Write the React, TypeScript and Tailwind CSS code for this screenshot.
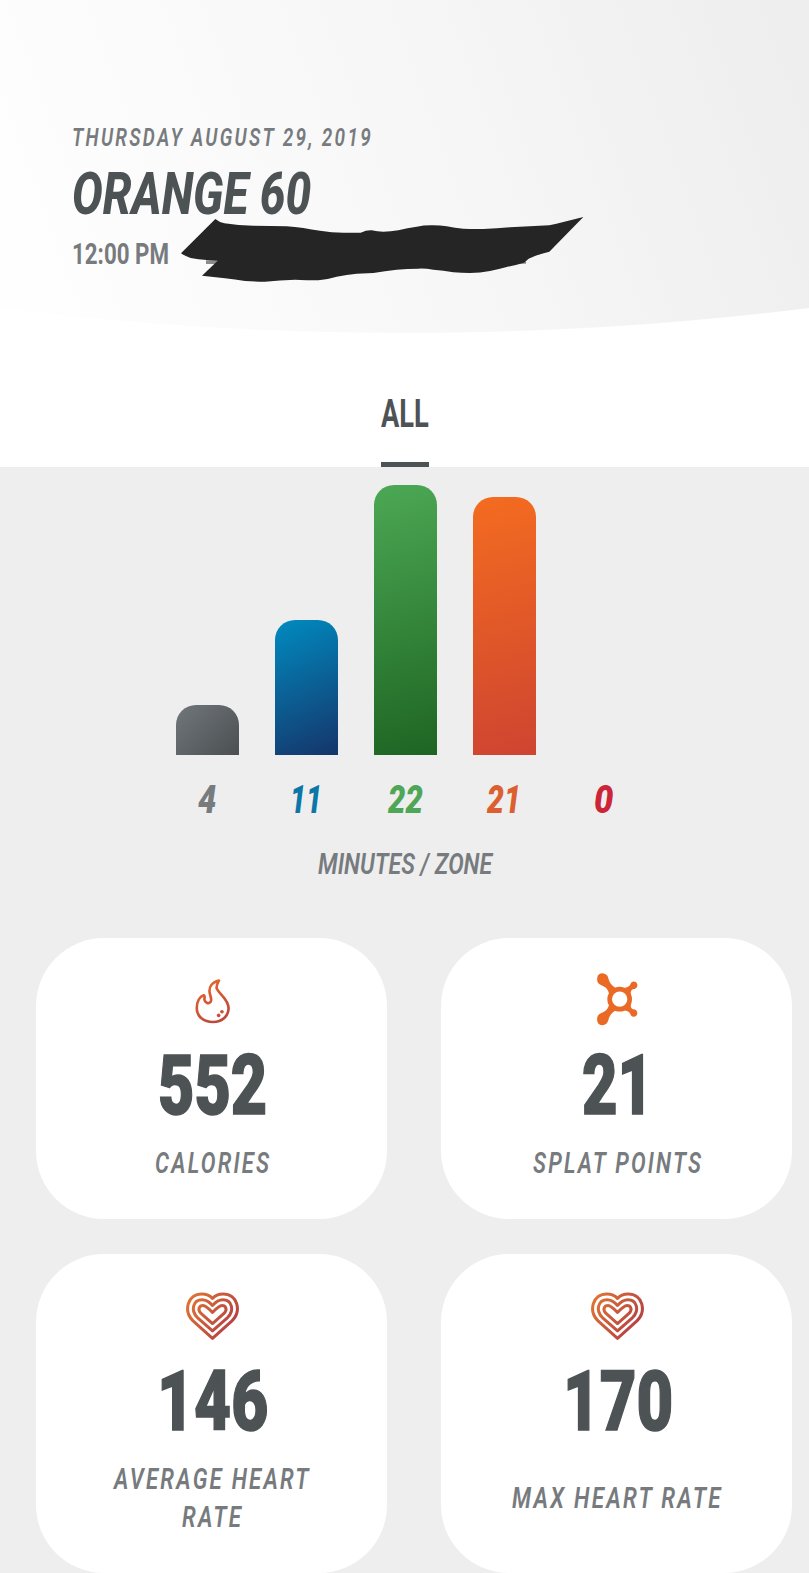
import { useLayoutEffect, useRef, useState } from "react";
import type { ReactNode } from "react";

type FitTextProps = {
  width: number;
  className?: string;
  children: ReactNode;
};

// Condenses a single line of text to the given width
function FitText({ width, className = "", children }: FitTextProps) {
  const ref = useRef<HTMLSpanElement>(null);
  const [scale, setScale] = useState(1);

  useLayoutEffect(() => {
    if (ref.current) setScale(width / ref.current.offsetWidth);
  }, [width]);

  return (
    <span className={`block ${className}`} style={{ width }}>
      <span
        ref={ref}
        className="inline-block origin-left whitespace-nowrap align-top"
        style={{ transform: `scaleX(${scale})` }}
      >
        {children}
      </span>
    </span>
  );
}

function FlameIcon() {
  return (
    <svg viewBox="0 0 120 145" className="h-12 w-10" fill="none">
      <defs>
        <linearGradient id="flame" x1="0" y1="0" x2="0.4" y2="1">
          <stop offset="0" stopColor="#ea6a2a" />
          <stop offset="1" stopColor="#bf4a3c" />
        </linearGradient>
      </defs>
      <path
        d="M78 11C56 16 47 31 50 48C53 62 58 70 52 76C46 82 35 77 34 68C34 62 37 58 32 55C20 59 11 74 11 94C11 120 32 136 60 136C88 136 107 118 107 94C107 66 78 52 71 34C70 24 74 18 78 11Z"
        stroke="url(#flame)"
        strokeWidth="8"
        strokeLinejoin="round"
      />
      <circle cx="87" cy="105" r="5.5" fill="#c9503a" />
      <circle cx="77" cy="116" r="5.5" fill="#c9503a" />
    </svg>
  );
}

function SplatIcon() {
  return (
    <svg viewBox="45 20 135 170" className="-mt-1 h-[57px] w-[45px]" fill="#ea6a25">
      <circle cx="119" cy="104" r="30" fill="none" stroke="#ea6a25" strokeWidth="14" />
      <path d="M52 38C54 24 74 22 82 34C88 43 84 56 106 70L88 90C82 66 70 66 60 60C52 55 50 47 52 38Z" />
      <path d="M52 170C54 184 74 186 82 174C88 165 84 152 106 138L88 118C82 142 70 142 60 148C52 153 50 161 52 170Z" />
      <path d="M134 70C148 68 150 62 152 57C156 48 170 49 172 60C173 70 166 74 159 74C153 76 152 80 152 90Z" />
      <path d="M134 138C148 140 150 146 152 151C156 160 170 159 172 148C173 138 166 134 159 134C153 132 152 128 152 118Z" />
    </svg>
  );
}

function HeartIcon() {
  return (
    <svg viewBox="0 0 164 155" className="-mt-[3px] h-[52px] w-[55px]" fill="none">
      <defs>
        <linearGradient id="heart" x1="0" y1="0" x2="164" y2="110" gradientUnits="userSpaceOnUse">
          <stop offset="0" stopColor="#e57a30" />
          <stop offset="1" stopColor="#b03c46" />
        </linearGradient>
      </defs>
      <g stroke="url(#heart)" strokeWidth="9" strokeLinejoin="round">
        <path d="M82 144L24 92C-6 62 8 12 50 12C66 12 76 18 82 25C88 18 98 12 114 12C156 12 170 62 140 92Z" />
        <path d="M82 122L37 82C15 60 25 29 51 29C65 29 74 37 82 46C90 37 99 29 113 29C139 29 149 60 127 82Z" />
        <path d="M82 100L47 69C37 58 42 46 54 46C62 46 70 54 82 67C94 54 102 46 110 46C122 46 127 58 117 69Z" />
      </g>
    </svg>
  );
}

const zones = [
  { minutes: 4, width: 18, bar: "h-[50px] bg-[linear-gradient(135deg,#70777b,#4b4f51)]", text: "text-[#777b7e]" },
  { minutes: 11, width: 32, bar: "h-[135px] bg-[linear-gradient(155deg,#008bc0,#15356a)]", text: "text-[#0b76a8]" },
  { minutes: 22, width: 35, bar: "h-[270px] bg-[linear-gradient(165deg,#4ca854,#1e6523)]", text: "text-[#4fa657]" },
  { minutes: 21, width: 34, bar: "h-[258px] bg-[linear-gradient(165deg,#f46c20,#ce4431)]", text: "text-[#dc5f31]" },
  { minutes: 0, width: 19, bar: "h-0", text: "text-[#cc2438]" },
];

const stats = [
  { icon: <FlameIcon />, value: "552", valueWidth: 109, label: [{ text: "CALORIES", width: 116 }] },
  { icon: <SplatIcon />, value: "21", valueWidth: 71, label: [{ text: "SPLAT POINTS", width: 170 }] },
  {
    icon: <HeartIcon />,
    value: "146",
    valueWidth: 111,
    label: [
      { text: "AVERAGE HEART", width: 197 },
      { text: "RATE", width: 61 },
    ],
  },
  { icon: <HeartIcon />, value: "170", valueWidth: 110, label: [{ text: "MAX HEART RATE", width: 211 }] },
];

function Header() {
  return (
    <header className="relative h-[333px] bg-[linear-gradient(70deg,#fefefe_5%,#f7f7f7_52%,#eeeeee_96%)] pl-[72px] pt-[124px] [clip-path:circle(3277px_at_50%_-2944px)]">
      <FitText width={301} className="text-[25px] font-semibold italic leading-7 tracking-[3px] text-[#777b7e]">
        THURSDAY AUGUST 29, 2019
      </FitText>
      <h1 className="mt-3">
        <FitText width={239} className="text-[59px] font-extrabold italic leading-[60px] text-[#4d5255]">
          ORANGE 60
        </FitText>
      </h1>
      <FitText width={97} className="mt-[15px] text-[29px] font-bold leading-[30px] text-[#777b7e]">
        12:00 PM
      </FitText>
      {/* Marker stroke over the studio name */}
      <svg viewBox="0 0 1290 300" className="absolute left-[170px] top-[200px] h-[100px] w-[430px]">
        <path d="M108 181h34v11h-34zM1050 184h18v7h-18z" fill="#8b8b8b" />
        <path
          fill="#252525"
          d="M33 160L136 57Q150 68 163 70Q205 77 250 77Q300 78 350 79Q375 81 400 84Q425 89 450 92Q490 99 530 98L572 98Q590 90 605 91Q622 95 640 95Q662 95 685 91Q712 84 740 80Q765 75 790 76Q810 76 830 79Q855 84 880 86Q910 88 940 87Q980 86 1020 82L1138 76Q1160 72 1180 66L1240 51L1138 155Q1115 160 1095 168L1076 176L1062 188Q1035 196 1010 201Q985 208 960 213Q930 219 900 219Q875 219 850 217Q820 211 790 209Q765 205 745 206Q712 206 680 209Q645 213 610 219L560 221Q530 224 500 230Q470 239 445 241Q410 241 375 239Q330 240 285 245Q255 245 225 243Q195 238 165 235Q130 230 96 227L143 182L110 180Q85 178 62 174Q45 168 33 160Z"
        />
      </svg>
    </header>
  );
}

export default function App() {
  return (
    <div className="h-[1573px] w-[809px] overflow-hidden bg-[#eeeeee] font-['Roboto',sans-serif]">
      <div className="flex h-[467px] flex-col bg-white">
        <Header />
        <nav className="flex flex-1 justify-center">
          <button className="flex flex-col justify-between border-b-[5px] border-[#4d5255] pt-[61px]">
            <FitText width={48} className="text-left text-[38px] font-bold leading-10 text-[#4d5255]">
              ALL
            </FitText>
          </button>
        </nav>
      </div>

      <section className="flex flex-col items-center pl-px pt-[18px]">
        <div className="flex h-[270px] items-end gap-9">
          {zones.map((zone) => (
            <div key={zone.minutes} className={`w-[63px] rounded-t-[20px] ${zone.bar}`} />
          ))}
        </div>
        <div className="mt-[25px] flex gap-9">
          {zones.map((zone) => (
            <div key={zone.minutes} className={`flex w-[63px] justify-center ${zone.text}`}>
              <FitText width={zone.width} className="text-[38px] font-black italic leading-10">
                {zone.minutes}
              </FitText>
            </div>
          ))}
        </div>
        <FitText width={174} className="mt-[29px] text-[29px] font-semibold italic leading-[30px] text-[#777b7e]">
          MINUTES / ZONE
        </FitText>
      </section>

      <section className="mt-[59px] grid grid-cols-[351px_351px] grid-rows-[281px_319px] gap-x-[54px] gap-y-[35px] pl-9">
        {stats.map((stat, i) => (
          <div key={i} className="flex flex-col items-center rounded-[68px] bg-white pb-[37px] pl-[2px] pt-9">
            <div className="flex h-[54px] items-center justify-center">{stat.icon}</div>
            <FitText
              width={stat.valueWidth}
              className="mt-4 text-[83px] font-black leading-[84px] text-[#4d5255] [-webkit-text-stroke:1.5px_#4d5255]"
            >
              {stat.value}
            </FitText>
            <div className="mt-[15px] flex flex-1 flex-col items-center justify-center">
              {stat.label.map((line) => (
                <FitText
                  key={line.text}
                  width={line.width}
                  className="text-[30px] font-semibold italic leading-[38px] tracking-[3px] text-[#777b7e]"
                >
                  {line.text}
                </FitText>
              ))}
            </div>
          </div>
        ))}
      </section>
    </div>
  );
}
